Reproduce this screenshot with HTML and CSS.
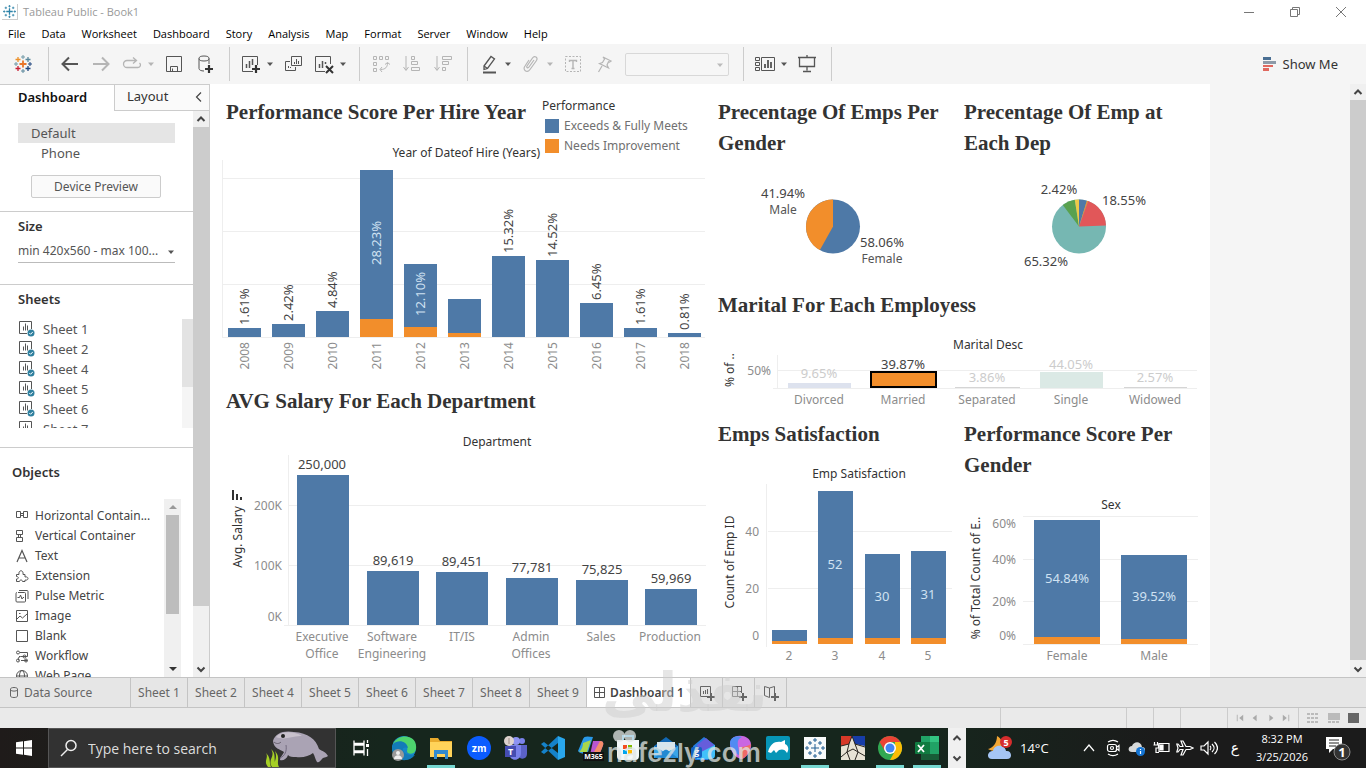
FILE: index.html
```html
<!DOCTYPE html>
<html lang="en">
<head>
<meta charset="utf-8">
<title>Tableau Public - Book1</title>
<link rel="stylesheet" href="styles.css">
</head>
<body>
<svg class="defs" aria-hidden="true">
  <symbol id="plusmark" viewBox="0 0 16 16"><path d="M8 4v8M4 8h8" stroke-width="1.6"/><path d="M8 0v3M6.500 1.500h3M8 13v3M6.500 14.500h3M0 8h3M1.500 6.500v3M13 8h3M14.500 6.500v3M3.500 2v3M2 3.500h3M12.500 2v3M11 3.500h3M3.500 11v3M2 12.500h3M12.500 11v3M11 12.500h3" stroke-width="1"/></symbol>
  <symbol id="caret" viewBox="0 0 8 8"><path d="M1 2.500h6L4 6z" fill="currentColor"/></symbol>
  <symbol id="up" viewBox="0 0 10 10"><path d="M1.500 7 5 3.500 8.500 7" fill="none" stroke="#444" stroke-width="2"/></symbol>
  <symbol id="down" viewBox="0 0 10 10"><path d="M1.500 3.500 5 7l3.500-3.500" fill="none" stroke="#444" stroke-width="2"/></symbol>
  <symbol id="sheet" viewBox="0 0 18 18"><path d="M9 13.500H1.500v-12h12V9M5.500 10.500v-4M7.500 10.500v-7M9.500 10.500v-5" fill="none" stroke="#555"/><circle cx="13" cy="13" r="3.500" fill="#2f7f9e"/><path d="m11.300 13 1.300 1.300 2.200-2.400" fill="none" stroke="#fff"/></symbol>
</svg>

<header>
  <div class="titlebar">
    <svg class="applogo" viewBox="0 0 16 16" stroke="#2d83a8"><use href="#plusmark"/></svg>
    <span>Tableau Public - Book1</span>
    <div class="winctl">
      <button aria-label="Minimize"><svg width="12" height="12"><path d="M1 6.500h10" stroke="#777"/></svg></button>
      <button aria-label="Restore"><svg width="12" height="12" fill="none" stroke="#777"><path d="M1.500 3.500h7v7h-7zM3.500 3.500v-2h7v7h-2"/></svg></button>
      <button aria-label="Close"><svg width="12" height="12" stroke="#777"><path d="m1 1 10 10M11 1 1 11"/></svg></button>
    </div>
  </div>
  <nav class="menubar">
    <button>File</button><button>Data</button><button>Worksheet</button><button>Dashboard</button><button>Story</button><button>Analysis</button><button>Map</button><button>Format</button><button>Server</button><button>Window</button><button>Help</button>
  </nav>
  <div class="toolbar">
    <div class="tgroup home">
      <button aria-label="Start page"><svg width="20" height="20" viewBox="0 0 20 20" fill="none"><path d="M10 6.500v7M6.500 10h7" stroke="#e8762c" stroke-width="1.800"/><path d="M10 1v4M8 3h4" stroke="#7099a6"/><path d="M10 15v4M8 17h4" stroke="#5b879b"/><path d="M3 8v4M1 10h4" stroke="#7099a6"/><path d="M17 8v4M15 10h4" stroke="#1f447e"/><path d="M5 3v5M2.500 5.500h5" stroke="#eb912c" stroke-width="1.300"/><path d="M15 3v5M12.500 5.500h5" stroke="#59879b" stroke-width="1.300"/><path d="M5 12v5M2.500 14.500h5" stroke="#c72035" stroke-width="1.300"/><path d="M15 12v5M12.500 14.500h5" stroke="#1f447e" stroke-width="1.300"/></svg></button>
    </div>
    <div class="tgroup">
      <button aria-label="Undo"><svg width="20" height="20"><path d="M18 10H3M9 3.500 2.500 10 9 16.500" stroke-width="2"/></svg></button>
      <button class="off" aria-label="Redo"><svg width="20" height="20"><path d="M2 10h15M11 3.500l6.500 6.500-6.500 6.500" stroke-width="2"/></svg></button>
      <button class="off" aria-label="Replay"><svg width="20" height="20"><path d="M14 6.500H5a3.500 3.500 0 0 0 0 7h11a2.500 2.500 0 0 0 1.500-4.500M11 3.500l3.500 3-3.500 3" stroke-width="1.300"/></svg></button>
      <button class="off caret" aria-label="Replay options"><svg width="8" height="8"><use href="#caret"/></svg></button>
      <button aria-label="Save"><svg width="20" height="20"><path d="M2.500 2.500h15v15h-15zM6.500 17.500v-5h7v5M8.500 14.500v3"/></svg></button>
      <button aria-label="New data source"><svg width="20" height="20"><ellipse cx="9" cy="4.500" rx="5" ry="2.500"/><path d="M4 4.500v10c0 1.500 2 2.500 5 2.500M14 4.500V10"/><path d="M14 11v8M10 15h8" stroke="#333" stroke-width="2.200"/></svg></button>
    </div>
    <div class="tgroup">
      <button aria-label="New worksheet"><svg width="20" height="20"><path d="M12 17.500H1.500v-15h15V11"/><path d="M5.500 14V10M8.500 14V7M11.500 11V5" stroke-width="1.500"/><path d="M15 11v8M11 15h8" stroke="#333" stroke-width="2.200"/></svg></button>
      <button class="caret" aria-label="New worksheet options"><svg width="8" height="8"><use href="#caret"/></svg></button>
      <button aria-label="Duplicate"><svg width="20" height="20"><path d="M8.500 2.500h10v9h-10zM7 7.500H2.500v9h10V13"/><path d="M11.500 10V8M13.500 10V5M15.500 10V7M5.500 14v-2M7.500 14v-1"/></svg></button>
      <button aria-label="Clear sheet"><svg width="20" height="20"><path d="M11 17.500H1.500v-15h15V10"/><path d="M5.500 14v-4M8.500 14V7M11.500 10V8" stroke-width="1.500"/><path d="m12 12 7 7M19 12l-7 7" stroke="#333" stroke-width="2"/></svg></button>
      <button class="caret" aria-label="Clear options"><svg width="8" height="8"><use href="#caret"/></svg></button>
    </div>
    <div class="tgroup">
      <button class="off" aria-label="Swap rows and columns"><svg width="20" height="20"><path d="M2.500 2.500h3v3h-3zM8.500 2.500h3v3h-3zM14.500 2.500h3v3h-3zM2.500 8.500h3v3h-3zM2.500 14.500h3v3h-3zM16.500 9c0 4-2 6.500-7 6.500M14 10.500l2.500-2 2.500 2M11 13l-2 2.500 2 2.500"/></svg></button>
      <button class="off" aria-label="Sort ascending"><svg width="20" height="20"><path d="M4 2v14M1.500 13 4 16.500 6.500 13M9.500 2.500h3v3h-3zM9.500 7.500h6v3h-6zM9.500 13.500h8v3h-8z"/></svg></button>
      <button class="off" aria-label="Sort descending"><svg width="20" height="20"><path d="M4 2v14M1.500 13 4 16.500 6.500 13M9.500 2.500h9v3h-9zM9.500 7.500h6v3h-6zM9.500 13.500h3v3h-3z"/></svg></button>
    </div>
    <div class="tgroup">
      <button aria-label="Highlight"><svg width="20" height="20"><path d="M5 12 12 2.500l3.500 2.500-7 9.500L5 15.500zM5 12l3.500 2.500" stroke-width="1.300"/><path d="M4 18.500h13" stroke-width="2"/></svg></button>
      <button class="caret" aria-label="Highlight options"><svg width="8" height="8"><use href="#caret"/></svg></button>
      <button class="off" aria-label="Group members"><svg width="20" height="20"><path d="M13 6 8 13c-1 1.500-3 .5-2-1l5.500-8c2-3 6-.5 4 2.500L9 15.500c-3 4-8 .5-5-3.500l4-6" stroke-width="1.200"/></svg></button>
      <button class="off caret" aria-label="Group options"><svg width="8" height="8"><use href="#caret"/></svg></button>
      <button class="off" aria-label="Show mark labels"><svg width="20" height="20"><path d="M2.500 2.500h15v15h-15z" stroke-dasharray="2 1.500"/><path d="M6.500 8V6.500h7V8M10 6.500v8M8.500 14.500h3" stroke-width="1.400"/></svg></button>
      <button class="off" aria-label="Fix axes"><svg width="20" height="20"><path d="m9 3 8 4-1.500 1-1-.2-1.500 3.200 1.500 3-9-4.500 3-1 2-3.500zM8 12l-3.500 6" stroke-width="1.200"/></svg></button>
      <div class="fit"><select aria-label="Fit" disabled><option></option></select><svg width="8" height="8"><use href="#caret"/></svg></div>
    </div>
    <div class="tgroup">
      <button aria-label="Show cards"><svg width="20" height="20"><path d="M.5 3.500h4v3h-4zM.5 8.500h4v3h-4zM.5 13.500h4v3h-4zM6.500 3.500h13v13h-13z"/><path d="M10 14v-4M13 14V6M16 14V8" stroke-width="1.800"/></svg></button>
      <button class="caret" aria-label="Card options"><svg width="8" height="8"><use href="#caret"/></svg></button>
      <button aria-label="Presentation mode"><svg width="20" height="20"><path d="M1 3.500h18M2.500 3.500v9h15v-9M10 1v2M10 12.500v4M6 17.500h8" stroke-width="1.300"/></svg></button>
    </div>
    <button class="showme"><svg width="16" height="16" viewBox="0 0 16 16"><path d="M1 1h8v3H1z" fill="#4a6f93"/><path d="M1 5h13v3H1z" fill="#8d9aa8"/><path d="M1 9h10v2H1z" fill="#e0685f"/><path d="M1 12h6v3H1z" fill="#e0685f"/></svg>Show Me</button>
  </div>
</header>

<main class="workspace">
  <aside class="side">
    <div class="sidetabs">
      <button class="on">Dashboard</button>
      <button class="layout">Layout</button>
      <button class="fold" aria-label="Collapse pane"><svg width="10" height="10"><path d="M7 .5 2.500 5 7 9.500" fill="none" stroke="#444" stroke-width="1.200"/></svg></button>
    </div>
    <div class="sidebody">
      <div class="panes">
        <section class="devices">
          <div class="device picked">Default</div>
          <div class="device phone">Phone</div>
          <button class="preview">Device Preview</button>
        </section>
        <section class="size">
          <h2><label for="size">Size</label></h2>
          <div class="sizebox"><select id="size"><option>min 420x560 - max 100...</option></select><svg width="8" height="8"><use href="#caret"/></svg></div>
        </section>
        <section class="sheets">
          <h2>Sheets</h2>
          <div class="listbox">
            <ul>
              <li><svg><use href="#sheet"/></svg>Sheet 1</li>
              <li><svg><use href="#sheet"/></svg>Sheet 2</li>
              <li><svg><use href="#sheet"/></svg>Sheet 4</li>
              <li><svg><use href="#sheet"/></svg>Sheet 5</li>
              <li><svg><use href="#sheet"/></svg>Sheet 6</li>
              <li><svg><use href="#sheet"/></svg>Sheet 7</li>
            </ul>
            <div class="thinbar"><i></i></div>
          </div>
        </section>
        <section class="objects">
          <h2>Objects</h2>
          <div class="listbox">
            <ul>
              <li><svg viewBox="0 0 14 14"><path d="M1.500 2.500h4v6h-4zM8.500 2.500h4v6h-4zM5.500 4.500h3M5.500 6.500h3"/></svg>Horizontal Contain...</li>
              <li><svg viewBox="0 0 14 14"><path d="M1.500 1.500h6v4h-6zM1.500 8.500h6v4h-6zM3.500 5.500v3M5.500 5.500v3"/></svg>Vertical Container</li>
              <li><svg viewBox="0 0 14 14"><path d="M2 13 7 1.500 12 13M4 9h6" stroke-width="1.200"/></svg>Text</li>
              <li><svg viewBox="0 0 14 14"><path d="M1.500 5.500H4c-1-5 5-5 4 0h2v2.500c4-1 4 4 0 3v1.500H7.500c0-2-3-2-3 0h-3V10c2.500 0 2.500-2.500 0-2.500z"/></svg>Extension</li>
              <li><svg viewBox="0 0 14 14"><path d="M3 3.500h6.500a1 1 0 0 1 1 1V12a1 1 0 0 1-1 1H2a1 1 0 0 1-1-1V4.500a1 1 0 0 1 1-1M4 1.500h8a1 1 0 0 1 1 1V10M2.500 8.500h2l1-2.500 1.500 4 1-1.500h1"/></svg>Pulse Metric</li>
              <li><svg viewBox="0 0 14 14"><path d="M1.500 1.500h11v11h-11zM2 10l3-3 2.500 2L12 5M4 4.500h1.500"/></svg>Image</li>
              <li><svg viewBox="0 0 14 14"><path d="M1.500 1.500h11v11h-11z"/></svg>Blank</li>
              <li><svg viewBox="0 0 14 14"><path d="M5 3.500h7.500v4h-7a2 2 0 0 0-2 2v2M6 11.500h6.500M4 7.500h1"/><circle cx="3" cy="3.500" r="1.500"/><circle cx="9.500" cy="7.500" r="1.500"/><circle cx="3" cy="11.500" r="1.500"/><circle cx="11" cy="11.500" r="1.500"/></svg>Workflow</li>
              <li><svg viewBox="0 0 14 14"><circle cx="7" cy="7" r="5.500"/><ellipse cx="7" cy="7" rx="2.500" ry="5.500"/><path d="M1.500 7h11"/></svg>Web Page</li>
            </ul>
            <div class="scroll inner"><svg viewBox="0 0 10 10"><path d="M1 7h8L5 3z" fill="#999"/></svg><i></i><b></b><svg viewBox="0 0 10 10"><path d="M1 3h8L5 7z" fill="#333"/></svg></div>
          </div>
        </section>
      </div>
      <div class="scroll outer"><svg><use href="#up"/></svg><i></i><b></b><svg><use href="#down"/></svg></div>
    </div>
  </aside>

  <div class="canvas">
    <div class="board">
      <div class="col">
        <section>
          <div class="head">
            <div class="headtext"><h3>Performance Score Per Hire Year</h3><p>Year of Dateof Hire (Years)</p></div>
            <div class="legend">
              <p>Performance</p>
              <ul><li><i class="blue"></i>Exceeds &amp; Fully Meets</li><li><i class="orange"></i>Needs Improvement</li></ul>
            </div>
          </div>
          <svg class="chart" viewBox="0 0 503 225">
            <path class="grid" d="M13 18.500h482M13 71.500h482M13 124.500h482M13 177.500h482M12.500 0v178"/>
            <g class="b"><path d="M18 168h33v9H18zM62 164h33v13H62zM106 151h33v26h-33zM150 10h33v149h-33zM194 104h33v63h-33zM238 139h33v34h-33zM282 96h33v81h-33zM326 100h33v77h-33zM370 143h33v34h-33zM414 168h33v9h-33zM458 173h33v4h-33z"/></g>
            <g class="o"><path d="M150 159h33v18h-33zM194 167h33v10h-33zM238 173h33v4h-33z"/></g>
            <g class="val">
              <text transform="translate(39 165) rotate(-90)">1.61%</text>
              <text transform="translate(83 161) rotate(-90)">2.42%</text>
              <text transform="translate(127 148) rotate(-90)">4.84%</text>
              <text class="in" transform="translate(171 105) rotate(-90)">28.23%</text>
              <text class="in" transform="translate(215 156) rotate(-90)">12.10%</text>
              <text transform="translate(303 93) rotate(-90)">15.32%</text>
              <text transform="translate(347 97) rotate(-90)">14.52%</text>
              <text transform="translate(391 140) rotate(-90)">6.45%</text>
              <text transform="translate(435 165) rotate(-90)">1.61%</text>
              <text transform="translate(479 170) rotate(-90)">0.81%</text>
            </g>
            <g class="cat end">
              <text transform="translate(39 182) rotate(-90)">2008</text>
              <text transform="translate(83 182) rotate(-90)">2009</text>
              <text transform="translate(127 182) rotate(-90)">2010</text>
              <text transform="translate(171 182) rotate(-90)">2011</text>
              <text transform="translate(215 182) rotate(-90)">2012</text>
              <text transform="translate(259 182) rotate(-90)">2013</text>
              <text transform="translate(303 182) rotate(-90)">2014</text>
              <text transform="translate(347 182) rotate(-90)">2015</text>
              <text transform="translate(391 182) rotate(-90)">2016</text>
              <text transform="translate(435 182) rotate(-90)">2017</text>
              <text transform="translate(479 182) rotate(-90)">2018</text>
            </g>
          </svg>
        </section>
        <section>
          <h3 class="pad">AVG Salary For Each Department</h3>
          <svg class="chart" viewBox="0 0 503 260">
            <path class="grid" d="M78 88.500h418M78 148.500h418M74 208.500h422M78.500 38v171"/>
            <path class="b" d="M87 58h52v150H87zM157 154h52v54h-52zM226 155h52v53h-52zM296 161h52v47h-52zM366 163h52v45h-52zM435 172h52v36h-52z"/>
            <text class="hd mid" x="287" y="29">Department</text>
            <g class="val mid"><text x="112" y="52">250,000</text><text x="183" y="148">89,619</text><text x="252" y="149">89,451</text><text x="322" y="155">77,781</text><text x="392" y="157">75,825</text><text x="461" y="166">59,969</text></g>
            <g class="cat end"><text x="72" y="93">200K</text><text x="72" y="153">100K</text><text x="72" y="204">0K</text></g>
            <g class="cat mid"><text x="112" y="224">Executive</text><text x="112" y="241">Office</text><text x="182" y="224">Software</text><text x="182" y="241">Engineering</text><text x="252" y="224">IT/IS</text><text x="321" y="224">Admin</text><text x="321" y="241">Offices</text><text x="391" y="224">Sales</text><text x="460" y="224">Production</text></g>
            <text class="hd mid" transform="translate(32 120) rotate(-90)">Avg. Salary</text>
            <path d="M22 73h2v10h-2zM26 77h2v6h-2zM30 80h2v3h-2z" fill="#333"/>
          </svg>
        </section>
      </div>
      <div class="col">
        <div class="pair">
          <section>
            <h3 class="pad top">Precentage Of Emps Per Gender</h3>
            <svg class="chart" viewBox="0 0 246 130">
              <circle class="b" cx="120" cy="67.500" r="27"/>
              <path class="o" d="M120 67.500V40.500A27 27 0 0 0 106.900 91.100z"/>
              <g class="val mid"><text x="70" y="39">41.94%</text><text class="cap" x="70" y="55">Male</text><text x="169" y="88">58.06%</text><text class="cap" x="169" y="104">Female</text></g>
            </svg>
          </section>
          <section>
            <h3 class="pad top">Precentage Of Emp at Each Dep</h3>
            <svg class="chart" viewBox="0 0 251 130">
              <circle class="t" cx="120" cy="67.500" r="27"/>
              <path class="b" d="M120 67.500V40.500A27 27 0 0 1 127.900 41.700z"/>
              <path class="o" d="M120 67.500 127.900 41.700A27 27 0 0 1 129.200 42.100z"/>
              <path class="r" d="M120 67.500 129.200 42.100A27 27 0 0 1 147 66.600z"/>
              <path class="g" d="M120 67.500 103.800 45.900A27 27 0 0 1 115.800 40.800z"/>
              <path class="y" d="M120 67.500 115.800 40.800A27 27 0 0 1 120 40.500z"/>
              <g class="val mid"><text x="100" y="35">2.42%</text><text x="165" y="46">18.55%</text><text x="87" y="107">65.32%</text></g>
            </svg>
          </section>
        </div>
        <section>
          <h3 class="pad">Marital For Each Employess</h3>
          <svg class="chart" viewBox="0 0 497 97">
            <path class="grid" d="M64 49.500h420M60 67.500h424M64.500 34v34"/>
            <path d="M75 62h63v5H75z" fill="#dde2ee"/><path d="M242 66h65v1h-65zM411 66h63v1h-63z" fill="#d5d5d5"/><path d="M327 51h63v16h-63z" fill="#dbe9e5"/>
            <rect x="158" y="51" width="65" height="15" fill="#f28e2b" stroke="#000" stroke-width="2"/>
            <text class="hd mid" x="275" y="28">Marital Desc</text>
            <g class="val mid"><text class="dim" x="106" y="57">9.65%</text><text x="190" y="48">39.87%</text><text class="dim" x="274" y="61">3.86%</text><text class="dim" x="358" y="48">44.05%</text><text class="dim" x="442" y="61">2.57%</text></g>
            <text class="cat end" x="58" y="54">50%</text>
            <g class="cat mid"><text x="106" y="83">Divorced</text><text x="190" y="83">Married</text><text x="274" y="83">Separated</text><text x="358" y="83">Single</text><text x="442" y="83">Widowed</text></g>
            <text class="hd mid" transform="translate(21 49) rotate(-90)">% of ..</text>
          </svg>
        </section>
        <div class="pair">
          <section>
            <h3 class="pad">Emps Satisfaction</h3>
            <svg class="chart" viewBox="0 0 246 227">
              <path class="grid" d="M55 81.500h184M55 138.500h184M53.500 34v163"/>
              <path class="b" d="M59 180h35v11H59zM105 41h35v147h-35zM152 104h35v84h-35zM198 101h35v87h-35z"/>
              <path class="o" d="M59 191h35v3H59zM105 188h35v6h-35zM152 188h35v6h-35zM198 188h35v6h-35z"/>
              <text class="hd mid" x="146" y="28">Emp Satisfaction</text>
              <g class="val mid in"><text x="122" y="119">52</text><text x="169" y="151">30</text><text x="215" y="149">31</text></g>
              <g class="cat end"><text x="46" y="86">40</text><text x="46" y="143">20</text><text x="46" y="190">0</text></g>
              <g class="cat mid"><text x="76" y="210">2</text><text x="122" y="210">3</text><text x="169" y="210">4</text><text x="215" y="210">5</text></g>
              <text class="hd mid" transform="translate(21 112) rotate(-90)">Count of Emp ID</text>
            </svg>
          </section>
          <section>
            <h3 class="pad">Performance Score Per Gender</h3>
            <svg class="chart" viewBox="0 0 251 196">
              <path class="grid" d="M64 35.500h175M64 78.500h175M64 120.500h175M64 163.500h175"/>
              <path class="b" d="M75 39h66v117H75zM162 74h66v84h-66z"/>
              <path class="o" d="M75 156h66v7H75zM162 158h66v5h-66z"/>
              <text class="hd mid" x="152" y="28">Sex</text>
              <g class="val mid in"><text x="108" y="102">54.84%</text><text x="195" y="120">39.52%</text></g>
              <g class="cat end"><text x="57" y="47">60%</text><text x="57" y="83">40%</text><text x="57" y="125">20%</text><text x="57" y="159">0%</text></g>
              <g class="cat mid"><text x="108" y="179">Female</text><text x="195" y="179">Male</text></g>
              <text class="hd mid" transform="translate(21 97) rotate(-90)">% of Total Count of E..</text>
            </svg>
          </section>
        </div>
      </div>
    </div>
  </div>
  <div class="scroll page"><svg><use href="#up"/></svg><i></i><b></b><svg><use href="#down"/></svg></div>
</main>

<footer>
  <nav class="tabs">
    <button class="source"><svg width="12" height="14"><path d="M1.500 3c0-2 7-2 7 0v7c0 2-7 2-7 0zM1.500 4c1 1.500 6 1.500 7 0" fill="none" stroke="#666"/></svg>Data Source</button>
    <button>Sheet 1</button><button>Sheet 2</button><button>Sheet 4</button><button>Sheet 5</button><button>Sheet 6</button><button>Sheet 7</button><button>Sheet 8</button><button>Sheet 9</button>
    <button class="current"><svg width="13" height="13"><path d="M1.500 1.500h10v10h-10zM6.500 1.500v10M1.500 6.500h10" fill="none" stroke="#555"/></svg>Dashboard 1</button>
    <button class="new" aria-label="New worksheet"><svg width="18" height="18" fill="none" stroke="#666"><path d="M10 12.500H2.500v-10h10V9M5.500 10V7M7.500 10V6M9.500 10V5"/><path d="M13 9v8M9 13h8" stroke-width="2"/></svg></button>
    <button class="new" aria-label="New dashboard"><svg width="18" height="18" fill="none" stroke="#666"><path d="M9 12.500H2.500v-10h9V9M2.500 7.500h9M7.500 2.500v10"/><path d="M13 9v8M9 13h8" stroke-width="2"/></svg></button>
    <button class="new" aria-label="New story"><svg width="18" height="18" fill="none" stroke="#666"><path d="M7.500 4 2.500 2.500v9l5 2V4l5-1.500V9"/><path d="M13 9v8M9 13h8" stroke-width="2"/></svg></button>
  </nav>
  <div class="status">
    <span class="c1"></span><span class="c2"></span><span class="c2"></span><span class="c3"></span>
    <span class="pager"><svg viewBox="0 0 10 10"><path d="M1 1h1v8H1zM9 1v8L4 5z"/></svg><svg viewBox="0 0 10 10"><path d="M7 1v8L2 5z"/></svg><svg viewBox="0 0 10 10"><path d="M3 1v8l5-4z"/></svg><svg viewBox="0 0 10 10"><path d="M8 1h1v8H8zM1 1v8l5-4z"/></svg></span>
    <span class="views"><svg viewBox="0 0 12 12" fill="#bbb"><path d="M0 1h3v2H0zM4 1h3v2H4zM8 1h3v2H8zM0 5h3v2H0zM4 5h3v2H4zM8 5h3v2H8zM0 9h3v2H0zM4 9h3v2H4zM8 9h3v2H8z"/></svg><svg viewBox="0 0 12 12" fill="#bbb"><path d="M0 1h12v7H0zM0 9h3v2H0zM4 9h3v2H4zM8 9h3v2H8z"/></svg><svg viewBox="0 0 12 12" fill="#666"><path d="M0 1h11v10H0z"/></svg></span>
  </div>
  <div class="taskbar">
    <button class="start" aria-label="Start"><svg width="16" height="16" fill="#fff"><path d="M0 2.300 7 1.300V7.500H0zM8 1.200 16 0v7.500H8zM0 8.500h7v6.200l-7-1zM8 8.500h8V16l-8-1.200z"/></svg></button>
    <div class="search">
      <svg width="18" height="18" fill="none" stroke="#eee" stroke-width="1.500"><circle cx="11" cy="6.500" r="5"/><path d="M7.500 10.500 1 17"/></svg>
      <input type="search" aria-label="Search" placeholder="Type here to search">
      <svg class="manatee" width="66" height="38" viewBox="0 0 66 38"><path d="M8 38c-5-8 4-10-1-18 6 5 2 10 5 18zM4 38c-5-6 1-9-2-14 5 5 3 9 5 14zM11 38c-2-6 3-8 0-16 6 7 1 10 4 16z" fill="#a5cf25"/><path d="M9 12C11 4 20 1 30 3c14 1 22 7 25 17 3 2 7 3 9 7-2 2-5 1-6 3-2 2-3 4-5 3-2-3-2-6-4-9-4 3-10 5-17 4-4 0-6 0-8-2-1 4-5 6-8 5 0-3 3-5 4-8-4-3-10-3-11-11z" fill="#aaa3b4"/><path d="M12 8c5-6 18-6 26-1-9-1-16 5-26 1z" fill="#c8c1cc"/><path d="M22 16c1 6-1 11-6 13" fill="none" stroke="#736b80"/><circle cx="19" cy="7" r="2" fill="#222"/><path d="M10 13c2 2 5 2 7 0" stroke="#625b69" fill="none"/></svg>
    </div>
    <button class="taskview" aria-label="Task view"><svg width="18" height="16" fill="none" stroke="#fff" stroke-width="1.300"><path d="M2 .500v3h10v-3M2 5h10v6H2zM2 15.500v-3h10v3M15.500 0v3M15.500 9v7"/><path d="M14 4h3v3h-3z" fill="#fff" stroke="none"/></svg></button>
    <div class="apps">
      <button aria-label="Edge"><svg viewBox="0 0 26 26"><circle cx="13" cy="13" r="12" fill="#1687c9"/><path d="M2 9C7-2 27-1 25 14c-1 6-9 6-9 2 2-6-4-8-14-7z" fill="#4ed36e"/><path d="M2 9c5-5 14-3 15 4-9-3-6 9 7 7-7 9-23 6-23-7z" fill="#137bb9"/><circle cx="7" cy="20" r="6" fill="#999"/><circle cx="7" cy="18" r="2" fill="#eee"/><path d="M3 24c0-5 8-5 8 0z" fill="#eee"/></svg></button>
      <button class="open" aria-label="File Explorer"><svg viewBox="0 0 26 26"><path d="M2 3h8l2 3h12v16H2z" fill="#e9ab2d"/><path d="M2 7h22v15H2z" fill="#ffd35a"/><path d="M6 15h14v9h-3v-5H9v5H6z" fill="#318bd0"/></svg></button>
      <button aria-label="Zoom"><svg viewBox="0 0 26 26"><circle cx="13" cy="13" r="12" fill="#0b5cff"/><text x="13" y="17" class="zm">zm</text></svg></button>
      <button aria-label="Teams"><svg viewBox="0 0 26 26"><circle cx="19" cy="6" r="3" fill="#7b83eb"/><circle cx="13" cy="6" r="4" fill="#8d93f2"/><path d="M13 10h11v9c0 6-8 6-9 1z" fill="#5b62c7"/><path d="M6 10h12v8c0 9-12 9-12 0z" fill="#7981ea"/><path d="M2 11h11v11H2z" fill="#454cb0"/><text x="7.500" y="20" class="teams">T</text><circle cx="6" cy="6" r="5" fill="#ddd2cd"/><path d="M6 3v6" stroke="#a08e87"/></svg></button>
      <button aria-label="VS Code"><svg viewBox="0 0 26 26"><path d="m18 1 7 3v18l-7 3z" fill="#29a7ec"/><path d="m18 1-17 16 3 2L18 8zM18 25 1 9l3-2 14 11z" fill="#1582ca"/></svg></button>
      <button aria-label="Microsoft 365"><svg viewBox="0 0 26 26"><path d="M5 4c1-3 4-3 10-2l-5 15c-2 3-8 2-10-1z" fill="#2999e8"/><path d="M5 8c0 6-4 9-4 9h8l4-12z" fill="#a9d64b"/><path d="M15 6h7c4 0 4 3 2 7l-3 7h-9z" fill="#b956d0"/><path d="M22 6c4 0 4 3 2 7l-2 5-6-1z" fill="#f48d69"/><path d="M5 17h21v9H5z" fill="#111"/><text x="15.500" y="24" class="m365">M365</text></svg></button>
      <button aria-label="Store"><svg viewBox="0 0 26 26"><path d="M8 7V1h10v6" fill="none" stroke="#34b0ed" stroke-width="2"/><path d="M2 5h22v16q0 4-4 4H6q-4 0-4-4z" fill="#f4f8f9"/><path d="M8 10h4v4H8z" fill="#f25022"/><path d="M13 10h4v4h-4z" fill="#7fba00"/><path d="M8 15h4v4H8z" fill="#00a4ef"/><path d="M13 15h4v4h-4z" fill="#ffb900"/></svg></button>
      <button aria-label="Mail"><svg viewBox="0 0 26 26"><path d="m1 11 12-9 12 9v12H1z" fill="#1268b4"/><path d="M4 7h18v10H4z" fill="#d6e5ed"/><path d="m1 11 12 7 12-7v12H1z" fill="#39a5e7"/><path d="m1 23 12-9 12 9z" fill="#2289d2"/></svg></button>
      <button aria-label="Outlook"><svg viewBox="0 0 26 26"><path d="m3 11 11-9 11 8v9l-7 6H5z" fill="#267ade"/><path d="m7 10 9-7 9 8-13 11z" fill="#665ddb"/><path d="m5 20 20-10v10q0 4-4 4H7z" fill="#42c0fa"/><rect x="1" y="12" width="11" height="11" rx="2" fill="#1261c2"/><text x="6.500" y="20" class="teams">g</text></svg></button>
      <button aria-label="Copilot"><svg viewBox="0 0 26 26"><path d="M7 2c8-3 16 0 17 7 1 7-6 15-10 15C6 23-2 8 7 2z" fill="#c967e2"/><path d="M3 8c0-6 7-8 12-6-8 3-2 12-3 18C6 18 3 13 3 8z" fill="#518bf2"/><path d="M14 12c4 0 8-2 10-3-1 8-5 14-10 15-3-2-2-9 0-12z" fill="#f06b67"/></svg></button>
      <button aria-label="Dolphin"><svg viewBox="0 0 26 26"><rect x="1" y="1" width="24" height="24" rx="2" fill="#0795b6"/><path d="M3 17C5 9 10 6 16 7l4-2v4c4 2 4 6 2 9-2-4-5-4-8-3l-3 3-2-3-3 3z" fill="#fff"/></svg></button>
      <button class="open" aria-label="Tableau"><svg viewBox="0 0 26 26"><path d="M2 2h22v22H2z" fill="#f8fafa"/><g stroke="#235f92" stroke-width="1"><path d="M13 9v8M9 13h8M13 3v4M11 5h4M13 19v4M11 21h4M5 11v4M3 13h4M21 11v4M19 13h4M8 6v4M6 8h4M18 6v4M16 8h4M8 16v4M6 18h4M18 16v4M16 18h4"/></g></svg></button>
      <button aria-label="Mosaic"><svg viewBox="0 0 26 26"><path d="M1 1h24v24H1z" fill="#e8e3d5"/><path d="M1 1h11l-3 8-8 2z" fill="#d73928"/><path d="M12 1h13v10l-10-2z" fill="#173da8"/><path d="m1 11 8-2 3-8 3 8 10 3M9 9l-2 8-6 5M15 9l3 8 7 4M7 17l6-3 5 3-3 8M7 17l3 8" fill="none" stroke="#29251f"/></svg></button>
      <button class="open" aria-label="Chrome"><svg viewBox="0 0 26 26"><circle cx="13" cy="13" r="12" fill="#31a852"/><path d="M2.600 7A12 12 0 0 1 23.400 7H13l-5 9z" fill="#ea4335"/><path d="M23.400 7A12 12 0 0 1 13 25l5-9V7z" fill="#fbbc05"/><circle cx="13" cy="13" r="6" fill="#fff"/><circle cx="13" cy="13" r="4.500" fill="#4285f4"/></svg></button>
      <button class="open" aria-label="Excel"><svg viewBox="0 0 26 26"><path d="M7 1h18v24H7z" fill="#21a366"/><path d="M16 1h9v6h-9z" fill="#33c481"/><path d="M7 7h9v12H7z" fill="#107c41"/><path d="M7 19h18v6H7z" fill="#185c37"/><rect x="1" y="7" width="12" height="12" rx="1" fill="#107c41"/><path d="m4 10 6 7M10 10l-6 7" stroke="#fff" stroke-width="1.800"/></svg></button>
    </div>
    <div class="stepper"><svg><use href="#up"/></svg><svg><use href="#down"/></svg></div>
    <button class="weather"><svg width="28" height="26" viewBox="0 0 28 26"><path d="M10 1c0 7-4 12-9 13 6 4 15 1 14-7-1-4-5-6-5-6z" fill="#f3a633"/><path d="M5 24C-1 24 0 16 6 16c1-7 12-7 13 0 6-1 7 8 1 8z" fill="#a5c5f4"/><circle cx="19" cy="7" r="6" fill="#d62d2d"/><text x="19" y="11" class="badge">5</text></svg>14°C</button>
    <div class="tray">
      <svg viewBox="0 0 18 18"><path d="m4 12 5-6 5 6"/></svg>
      <svg viewBox="0 0 18 18"><path d="M4 3c3-2 7-2 10 0M4 15c3 2 7 2 10 0"/><rect x="3.500" y="5.500" width="9" height="7" rx="2"/><path d="m13 8 2-1.500v5L13 10"/><circle cx="8" cy="9" r="1.500"/></svg>
      <svg viewBox="0 0 18 18"><path d="M4 13c-5 0-4-6 0-6 2-5 9-5 10 1 4 0 4 5 0 5z" fill="#d7d9d9" stroke="none"/><circle cx="12.500" cy="12.500" r="4.500" fill="#1474d3" stroke="none"/><path d="M12.500 12v3M12.500 10v1"/></svg>
      <svg viewBox="0 0 18 18"><path d="M7 4.500h10v8H7zM2.500 3v3M5.500 3v3M1.500 6h5v3H4v4.500h3"/><path d="M8 6h3v5H8z" fill="#fff"/></svg>
      <svg viewBox="0 0 18 18"><path d="m17 9-3-1.500h-4L7 2H5l2 5.500H4L2 5H.800L2 9 .800 13H2l2-2.500h3L5 16h2l3-5.500h4z"/></svg>
      <svg viewBox="0 0 18 18"><path d="M1 7h3l4-4v12l-4-4H1zM10 7c1 1 1 3 0 4M12 5c3 3 3 5 0 8M14.500 3c4 4 4 8 0 12"/></svg>
    </div>
    <span class="lang" lang="ar">ع</span>
    <time class="clock">8:32 PM<br>3/25/2026</time>
    <button class="notify" aria-label="Notifications"><svg width="26" height="26" viewBox="0 0 26 26"><path d="M1 2h16v12H8l-4 4v-4H1z" fill="#fff"/><path d="M4 5h10M4 8h10M4 11h7" stroke="#222"/><circle cx="17" cy="17" r="8" fill="#333" stroke="#8b8b8b"/><text x="17" y="22" class="badge big">1</text></svg></button>
  </div>
  <div class="mark ar" lang="ar" dir="rtl">نفذلى</div>
  <svg class="mark dots" width="24" height="12" viewBox="0 0 24 12"><circle cx="6" cy="6" r="6"/><circle cx="17" cy="6" r="6"/></svg>
  <div class="mark en">nafezly.com</div>
</footer>
</body>
</html>
```
FILE: styles.css
```css
* { box-sizing: border-box; }
body { margin: 0; min-height: 100vh; display: flex; flex-direction: column; background: #fff; color: #333; font: 12px/20px "Noto Sans", "Open Sans", sans-serif; }
button { margin: 0; padding: 0; border: 0; background: none; color: inherit; font: inherit; }
h2, h3, p, ul { margin: 0; padding: 0; }
ul { list-style: none; }
svg { flex: none; display: block; }
.defs { width: 0; height: 0; position: absolute; }

.titlebar { display: flex; align-items: center; height: 23px; padding-left: 2px; gap: 5px; color: #999; font-family: "Open Sans", sans-serif; font-size: 11px; }
.applogo { width: 16px; height: 16px; padding: 1px; border: solid #ccc; border-width: 0 1px 1px 0; }
.winctl { margin-left: auto; display: flex; padding-right: 2px; }
.winctl button { width: 46px; height: 20px; display: grid; place-items: center; }
.menubar { display: flex; height: 21px; color: #000; font-family: "Open Sans", sans-serif; font-size: 11px; }
.menubar button { padding: 0 8px; }

.toolbar { display: flex; align-items: center; height: 40px; background: #f5f5f5; color: #555; }
.tgroup { display: flex; align-items: center; gap: 11px; height: 34px; padding: 0 14px 0 11px; border-right: 1px solid #ccc; }
.tgroup.home { padding: 0 15px 0 13px; }
.tgroup button > svg { fill: none; stroke: currentColor; }
.tgroup .caret { margin: 0 -2px 0 -6px; }
.tgroup .caret svg, .fit svg { stroke: none; }
.off { color: #b5b5b5; }
.fit { position: relative; color: #bbb; }
.fit select { appearance: none; display: block; width: 104px; height: 23px; border: 1px solid #ccc; border-radius: 2px; background: #f7f7f7; }
.fit svg { position: absolute; right: 5px; top: 8px; }
.showme { display: flex; align-items: center; gap: 5px; margin-left: auto; padding-right: 28px; color: #333; font-size: 13px; }

.workspace { flex: 1 0 auto; display: flex; align-items: stretch; }
.side { width: 210px; flex: none; display: flex; flex-direction: column; border-right: 1px solid #ccc; border-top: 1px solid #ccc; }
.sidetabs { display: flex; height: 26px; }
.sidetabs button { padding-bottom: 2px; font-size: 13px; line-height: 23px; }
.sidetabs .on { width: 114px; padding-left: 18px; text-align: left; font-weight: 600; color: #111; }
.sidetabs .layout { flex: 1; padding-left: 12px; text-align: left; border-left: 1px solid #ccc; border-bottom: 1px solid #ccc; background: #fafafa; }
.sidetabs .fold { width: 20px; padding-left: 5px; border-bottom: 1px solid #ccc; background: #fafafa; }
.sidebody { flex: 1; display: flex; min-height: 0; }
.panes { flex: 1; min-width: 0; display: flex; flex-direction: column; color: #555; font-size: 13px; }
.panes section { border-bottom: 1px solid #ccc; }
.panes h2 { font-size: 13px; line-height: 20px; font-weight: 600; color: #333; }
.devices { padding: 12px 18px 13px; }
.device { line-height: 20px; padding-left: 13px; }
.device.phone { padding-left: 23px; }
.picked { background: #e5e5e5; }
.preview { display: block; width: 130px; height: 23px; margin: 12px 0 0 13px; border: 1px solid #ccc; border-radius: 2px; background: #fafafa; font-size: 12px; line-height: 20px; }
.size { padding: 4px 18px 21px; }
.sizebox { position: relative; margin-top: 4px; border-bottom: 1px solid #bbb; }
.sizebox select { appearance: none; display: block; width: 100%; height: 22px; padding: 0; border: 0; background: none; color: #555; font: inherit; font-size: 12px; }
.sizebox svg { position: absolute; right: 0; top: 8px; }
.sheets { padding: 4px 0 19px 18px; }
.listbox { display: flex; overflow: hidden; }
.sheets .listbox { height: 109px; margin-top: 10px; }
.listbox ul { flex: 1; min-width: 0; }
.listbox li { display: flex; align-items: center; height: 20px; white-space: nowrap; }
.sheets li { gap: 7px; }
.sheets li svg { width: 18px; height: 18px; }
.thinbar { width: 11px; background: #f5f5f5; }
.thinbar i { display: block; height: 68px; background: #e3e3e3; }
.panes .objects { flex: 1; padding: 14px 12px 0; border-bottom: 0; color: #444; font-size: 12px; display: flex; flex-direction: column; min-height: 0; }
.objects .listbox { flex: 1 0 0px; min-height: 0; margin-top: 17px; }
.objects ul { padding: 7px 0 0 3px; }
.objects li { gap: 6px; }
.objects li svg { width: 14px; height: 14px; fill: none; stroke: #555; }
.scroll { display: flex; flex-direction: column; align-items: stretch; flex: none; width: 16px; background: #f0f0f0; }
.scroll svg { width: 10px; height: 16px; align-self: center; }
.scroll i { background: #ccc; flex: 479; }
.scroll b { flex: 55; }
.scroll.inner { width: 17px; }
.scroll.inner i { flex: 98; margin: 0 2px; background: #bdbdbd; }
.scroll.inner b { flex: 46; }
.page i { flex: 560; }
.page b { flex: 1; }

.canvas { flex: 1; min-width: 0; background: #f5f5f5; }
.board { display: grid; grid-template-columns: 503fr 497fr; max-width: 1000px; min-height: 100%; background: #fff; }
.pair { display: grid; grid-template-columns: 246fr 251fr; }
h3 { font: bold 21px/31px "Liberation Serif", serif; color: #333; }
h3.pad { padding: 1px 0 0 5px; }
.col:first-child h3.pad { padding-left: 16px; }
h3.pad.top { padding-top: 13px; }
.head { display: flex; height: 76px; padding: 12px 0 0 16px; }
.headtext { width: 314px; }
.headtext h3 { white-space: nowrap; padding-top: 1px; }
.headtext p { text-align: right; padding-top: 15px; line-height: 20px; white-space: nowrap; }
.legend { padding-left: 2px; white-space: nowrap; color: #333; }
.legend li { display: flex; align-items: center; gap: 5px; padding-left: 3px; height: 20px; color: #707070; }
.legend i { width: 14px; height: 14px; }
.blue { background: #4e79a7; }
.orange { background: #f28e2b; }
.chart { width: 100%; height: auto; font: 12px "Noto Sans", sans-serif; }
.grid { fill: none; stroke: #eee; }
.b { fill: #4e79a7; } .o { fill: #f28e2b; } .t { fill: #76b7b2; } .r { fill: #e15759; } .g { fill: #59a14f; } .y { fill: #edc948; }
.hd { fill: #333; }
.val { fill: #444; font-size: 13px; }
.cap { fill: #555; font-size: 12px; }
.cat { fill: #8c8c8c; }
.val .in, .val.in { fill: #d0e2f2; }
.dim { fill: #ccc; }
.mid { text-anchor: middle; }
.end { text-anchor: end; }

footer { position: relative; }
.tabs { display: flex; height: 31px; border: solid #c4c4c4; border-width: 1px 0; background: #e6e6e6; color: #666; font-size: 12px; }
.tabs button { width: 57px; border-right: 1px solid #c4c4c4; }
.tabs .source { display: flex; align-items: center; gap: 3px; width: 131px; padding-left: 9px; }
.tabs .current { display: flex; align-items: center; justify-content: center; gap: 4px; width: 104px; background: #fff; color: #444; font-weight: 600; white-space: nowrap; }
.tabs .new { width: 32px; display: grid; place-items: center; }
.status { display: flex; justify-content: flex-end; height: 20px; background: #eaeaea; }
.status span { border-left: 1px solid #ccc; }
.c1 { width: 126px; } .c2 { width: 27px; } .c3 { width: 47px; }
.pager, .views { display: flex; align-items: center; justify-content: space-between; }
.pager { width: 71px; padding: 0 7px; }
.pager svg { width: 10px; height: 8px; fill: #aaa; }
.views { width: 68px; padding: 0 6px 0 8px; }
.views svg { width: 12px; height: 12px; }

.taskbar { display: flex; align-items: center; height: 40px; background: linear-gradient(90deg, #1f1b1a, #16261d 28%, #16261d 68%, #1b1b1b 85%); color: #fff; font-family: "Open Sans", sans-serif; }
.start { width: 48px; display: grid; place-items: center; }
.search { display: flex; align-items: center; width: 288px; height: 40px; padding: 0 5px 0 11px; gap: 10px; background: #323232; border: 1px solid #555; }
.search input { flex: 1; min-width: 0; padding: 0; border: 0; background: none; color: #ddd; font: 14px "Open Sans", sans-serif; }
.search input::placeholder { color: #ddd; }
.taskview { width: 49px; display: grid; place-items: center; }
.apps { display: flex; flex: 0 1 561px; height: 40px; }
.apps button { flex: 1; display: grid; place-items: center; }
.apps svg { width: 26px; height: 26px; }
.apps .open { background: linear-gradient(#76d7d0, #76d7d0) center bottom / 28px 3px no-repeat; }
.zm { font: bold 10px "Inter", sans-serif; fill: #fff; text-anchor: middle; }
.teams { font: bold 9px "Open Sans", sans-serif; fill: #fff; text-anchor: middle; }
.m365 { font: bold 7px "Open Sans", sans-serif; fill: #fff; text-anchor: middle; }
.badge { font: bold 9px "Open Sans", sans-serif; fill: #fff; text-anchor: middle; }
.badge.big { font-size: 13px; }
.stepper { display: flex; flex-direction: column; align-items: center; justify-content: space-around; width: 18px; height: 40px; margin-left: 2px; background: #f0f0f0; }
.stepper svg { width: 10px; height: 10px; }
.weather { display: flex; align-items: center; gap: 5px; margin-left: 21px; font-size: 13px; }
.tray { display: flex; gap: 6px; margin-left: auto; }
.tray svg { width: 18px; height: 18px; fill: none; stroke: #fff; stroke-width: 1.200; }
.lang { width: 34px; text-align: center; font: 14px "DejaVu Sans", sans-serif; }
.clock { width: 60px; text-align: center; font-size: 11px; line-height: 18px; white-space: nowrap; }
.notify { margin: 0 15px 0 13px; }
.mark { position: absolute; pointer-events: none; }
.mark.ar { left: 602px; top: -16px; color: rgba(205, 205, 205, .5); font: bold 54px "DejaVu Sans", sans-serif; }
.mark.dots { left: 613px; top: 53px; fill: rgba(225, 230, 228, .75); }
.mark.en { left: 607px; bottom: 0; color: rgba(225, 230, 228, .75); font: 600 26px/30px "Inter", sans-serif; }
```
